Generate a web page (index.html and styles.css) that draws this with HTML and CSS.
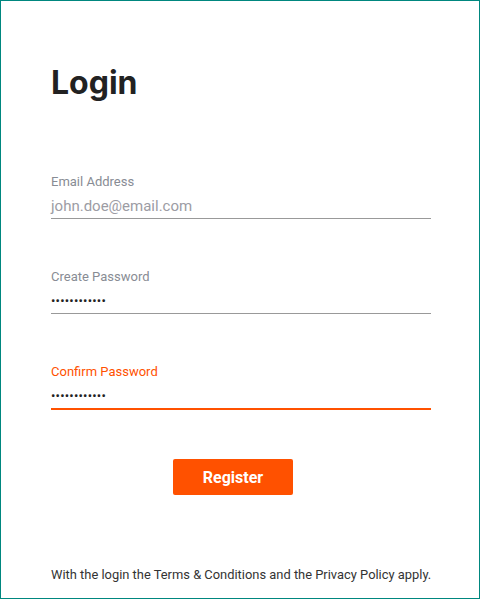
FILE: index.html
```html
<!DOCTYPE html>
<html>
<head>
<meta charset="utf-8">
<link rel="stylesheet" href="styles.css">
</head>
<body>
<div class="frame">
  <h1 class="title">Login</h1>
  <form class="form">
    <div class="field">
      <label class="label">Email Address</label>
      <div class="value placeholder">john.doe@email.com</div>
    </div>
    <div class="field">
      <label class="label">Create Password</label>
      <div class="value dots">••••••••••••</div>
    </div>
    <div class="field active">
      <label class="label">Confirm Password</label>
      <div class="value dots">••••••••••••</div>
    </div>
    <div class="actions">
      <button type="button" class="btn">Register</button>
    </div>
  </form>
  <p class="legal">With the login the Terms &amp; Conditions and the Privacy Policy apply.</p>
</div>
</body>
</html>
```

FILE: styles.css
```css
* { box-sizing: border-box; }
html, body { margin: 0; padding: 0; background: #fff; }
body { font-family: Roboto, "Liberation Sans", sans-serif; }
.frame {
  width: 480px;
  height: 599px;
  border: 1px solid #00877f;
  padding: 0 48px 0 50px;
  display: flex;
  flex-direction: column;
}
.title {
  margin: 62px 0 0;
  font-family: Inter, Roboto, sans-serif;
  font-size: 32px;
  line-height: 40px;
  font-weight: 700;
  color: #222;
}
.form {
  margin-top: 71px;
  display: flex;
  flex-direction: column;
}
.field {
  display: flex;
  flex-direction: column;
  height: 95px;
}
.label {
  font-size: 13px;
  line-height: 16px;
  color: #888c94;
}
.value {
  height: 29px;
  line-height: 22px;
  font-size: 15px;
  border-bottom: 1px solid #999;
  padding-top: 5px;
}
.placeholder { color: #9c9ca4; }
.dots {
  color: #222;
  font-size: 13px;
  letter-spacing: 0.2px;
}
.active .label { color: #ff5100; }
.active .value { border-bottom: 2px solid #ff5100; height: 30px; }
.actions {
  margin-top: 0;
  padding-left: 122px;
}
.btn {
  width: 120px;
  height: 36px;
  border: none;
  border-radius: 2px;
  background: #ff5100;
  color: #fff;
  font-family: Roboto, sans-serif;
  font-weight: 700;
  font-size: 16px;
  padding: 0;
}
.legal {
  margin: auto 0 15px;
  font-size: 12.9px;
  line-height: 16px;
  white-space: nowrap;
  color: #333;
}
```
